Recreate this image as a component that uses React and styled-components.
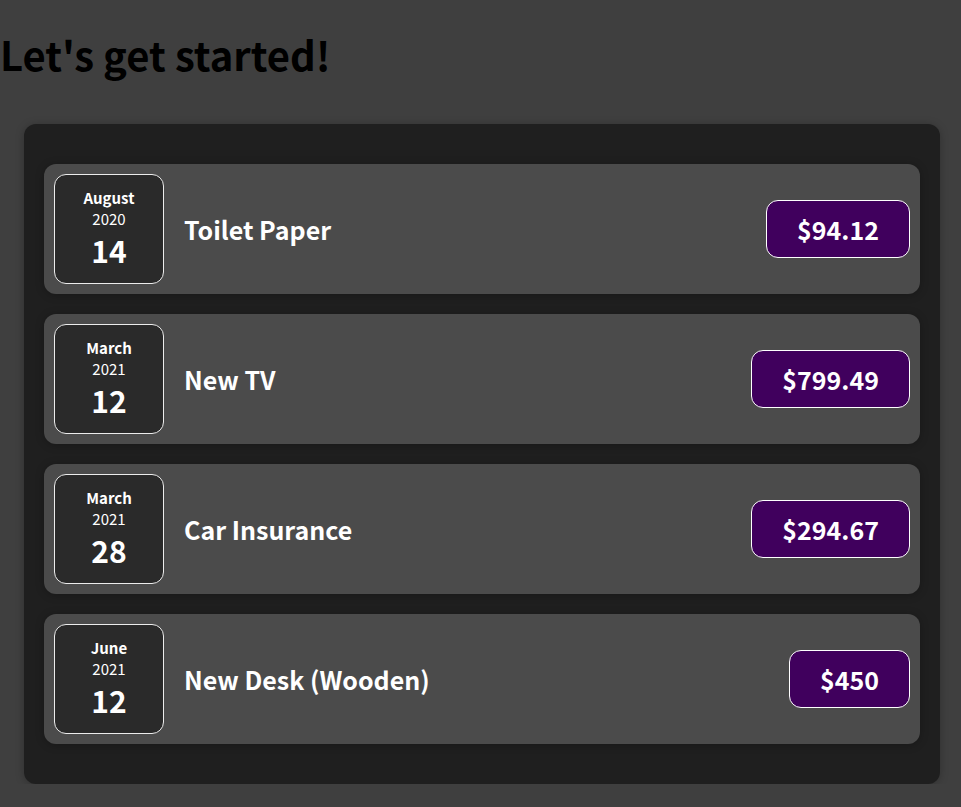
import React from "react";
import styled, { createGlobalStyle } from "styled-components";

const GlobalStyle = createGlobalStyle`
  html { font-size: 20px; font-family: "Noto Sans CJK JP", "Source Sans Pro", sans-serif; }
  body { margin: 0; background-color: #3f3f3f; }
  * { box-sizing: border-box; }
`;

const Title = styled.h1`
  margin: 26px 0 0 0;
  font-size: 40px;
  font-weight: bold;
  color: #000;
  line-height: 1.4;
`;

const Card = styled.div`
  border-radius: 12px;
  box-shadow: 0 1px 8px rgba(0, 0, 0, 0.25);
`;

const Expenses = styled(Card)`
  background-color: #1f1f1f;
  padding: 1rem;
  width: 916px;
  margin: 42px 0 0 24px;
`;

const Item = styled(Card)`
  display: flex;
  justify-content: space-between;
  align-items: center;
  padding: 0.5rem;
  margin: 1rem 0;
  background-color: #4b4b4b;
`;

const DateBox = styled.div`
  display: flex;
  flex-direction: column;
  width: 5.5rem;
  height: 5.5rem;
  border: 1px solid #ececec;
  background-color: #2a2a2a;
  color: white;
  border-radius: 12px;
  align-items: center;
  justify-content: center;
`;

const Month = styled.div`
  font-size: 0.75rem;
  font-weight: bold;
  line-height: 1.4;
`;

const Year = styled.div`
  font-size: 0.75rem;
  line-height: 1.4;
`;

const Day = styled.div`
  font-size: 1.5rem;
  font-weight: bold;
  line-height: 1.4;
`;

const Description = styled.div`
  display: flex;
  align-items: center;
  flex: 1;
`;

const Name = styled.h2`
  flex: 1;
  margin: 0 1rem;
  font-size: 1.25rem;
  color: white;
`;

const Price = styled.div`
  font-size: 1.25rem;
  font-weight: bold;
  color: white;
  background-color: #40005d;
  border: 1px solid white;
  padding: 0.5rem 1.5rem;
  border-radius: 12px;
`;

const data = [
  { month: "August", year: "2020", day: "14", title: "Toilet Paper", price: "$94.12" },
  { month: "March", year: "2021", day: "12", title: "New TV", price: "$799.49" },
  { month: "March", year: "2021", day: "28", title: "Car Insurance", price: "$294.67" },
  { month: "June", year: "2021", day: "12", title: "New Desk (Wooden)", price: "$450" },
];

export default function App() {
  return (
    <>
      <GlobalStyle />
      <Title>Let's get started!</Title>
      <Expenses>
        {data.map((e, i) => (
          <Item key={i}>
            <DateBox>
              <Month>{e.month}</Month>
              <Year>{e.year}</Year>
              <Day>{e.day}</Day>
            </DateBox>
            <Description>
              <Name>{e.title}</Name>
              <Price>{e.price}</Price>
            </Description>
          </Item>
        ))}
      </Expenses>
    </>
  );
}
